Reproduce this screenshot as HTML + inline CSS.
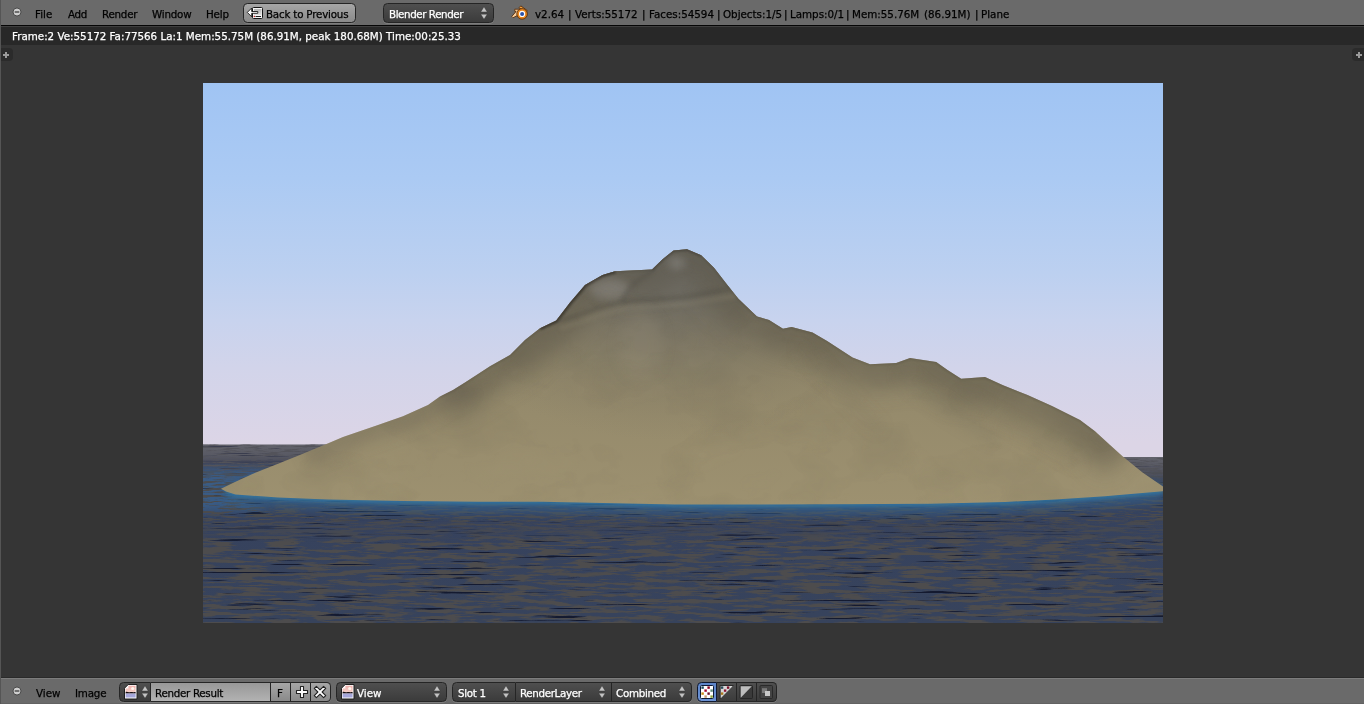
<!DOCTYPE html>
<html lang="en">
<head>
<meta charset="utf-8">
<title>Blender Render</title>
<style>
html,body{margin:0;padding:0;}
body{width:1364px;height:704px;overflow:hidden;background:#353535;position:relative;
  font-family:"DejaVu Sans","Liberation Sans",sans-serif;font-size:10.32px;line-height:13px;color:#000;}
.abs{position:absolute;}
#top{left:0;top:0;width:1364px;height:25px;background:#6a6a6a;}
#topline{left:0;top:25px;width:1364px;height:1px;background:#050505;}
#info{left:0;top:26px;width:1364px;height:19px;background:#282828;color:#fff;box-sizing:border-box;border-top:1px solid #3f3f3f;}
#bottom{left:0;top:677px;width:1364px;height:27px;background:linear-gradient(#2a2a2a 0,#2a2a2a 1px,#7d7d7d 1px,#7d7d7d 2px,#6a6a6a 2px,#6a6a6a 26px,#626262 26px);}
.t{position:absolute;white-space:nowrap;will-change:transform;-webkit-text-stroke:0.25px currentColor;}
.w{position:absolute;box-sizing:border-box;height:20px;border:1px solid #252525;box-shadow:0 1px 0 rgba(255,255,255,0.13);}
.rl{border-top-left-radius:4.5px;border-bottom-left-radius:4.5px;}
.rr{border-top-right-radius:4.5px;border-bottom-right-radius:4.5px;}
.nl{border-left:none;}
.light{background:linear-gradient(#a6a6a6,#8a8a8a);}
.field{background:linear-gradient(#989898,#b2b2b2);}
.dark{background:linear-gradient(#4f4f4f,#3b3b3b);color:#fff;}
.sel{background:linear-gradient(#5d85c9,#6b92d4);border-color:#10192f;}
#leftedge{left:0;top:0;width:1px;height:704px;background:#555;}
.corner{position:absolute;width:12px;height:13px;background:#2b2b2b;top:48px;}
svg{position:absolute;overflow:visible;}
</style>
</head>
<body>
<div id="top" class="abs">
<svg style="left:11.2px;top:5.5px" width="12" height="12" viewBox="-6 -6 12 12"><circle r="4" fill="#cdcdcd" stroke="#404040" stroke-width="0.9"/><rect x="-2.3" y="-0.6" width="4.6" height="1.2" fill="#333"/></svg>
<span class="t" style="left:35px;top:7.5px;letter-spacing:0px">File</span>
<span class="t" style="left:68px;top:7.5px;letter-spacing:-0.3px">Add</span>
<span class="t" style="left:102px;top:7.5px;letter-spacing:-0.25px">Render</span>
<span class="t" style="left:152px;top:7.5px;letter-spacing:-0.2px">Window</span>
<span class="t" style="left:206px;top:7.5px;letter-spacing:-0.15px">Help</span>
<div class="w rl rr light" style="left:243px;top:3px;width:113px"></div>
<span class="t" style="left:266px;top:7.5px;letter-spacing:-0.2px">Back to Previous</span>
<div class="w rl rr dark" style="left:383px;top:3px;width:111px"></div>
<span class="t" style="left:388.7px;top:7.5px;letter-spacing:-0.42px;color:#fff">Blender Render</span>
<svg style="left:480.4px;top:3px" width="8" height="20" viewBox="0 0 8 20"><path d="M4 3.8 L7.2 8.9 L0.8 8.9 Z M4 16.3 L7.2 11.2 L0.8 11.2 Z" fill="#c4c4c4" stroke="#333" stroke-width="0.4" stroke-linejoin="round"/></svg>
<span class="t" style="left:535px;top:7.5px">v2.64</span>
<span class="t" style="left:568px;top:7.5px">|</span>
<span class="t" style="left:575px;top:7.5px">Verts:55172</span>
<span class="t" style="left:642px;top:7.5px">|</span>
<span class="t" style="left:649px;top:7.5px">Faces:54594</span>
<span class="t" style="left:717px;top:7.5px">|</span>
<span class="t" style="left:723px;top:7.5px">Objects:1/5</span>
<span class="t" style="left:784px;top:7.5px">|</span>
<span class="t" style="left:790px;top:7.5px">Lamps:0/1</span>
<span class="t" style="left:846px;top:7.5px">|</span>
<span class="t" style="left:852px;top:7.5px">Mem:55.76M</span>
<span class="t" style="left:924px;top:7.5px">(86.91M)</span>
<span class="t" style="left:975px;top:7.5px">|</span>
<span class="t" style="left:981px;top:7.5px">Plane</span>
</div>
<div id="topline" class="abs"></div>
<div id="info" class="abs"><span class="t" style="left:12px;top:2.5px">Frame:2 Ve:55172 Fa:77566 La:1 Mem:55.75M (86.91M, peak 180.68M) Time:00:25.33</span></div>
<div class="corner" style="left:1px;border-radius:0 4px 4px 0"></div>
<svg style="left:3px;top:52px" width="6" height="6" viewBox="0 0 6 6"><path d="M2 0h2v2h2v2h-2v2h-2v-2h-2v-2h2z" fill="#9a9a9a"/></svg>
<div class="corner" style="left:1352px;border-radius:4px 0 0 4px"></div>
<svg style="left:1356px;top:52px" width="6" height="6" viewBox="0 0 6 6"><path d="M2 0h2v2h2v2h-2v2h-2v-2h-2v-2h2z" fill="#9a9a9a"/></svg>
<svg id="img" style="left:203px;top:83px" width="960" height="540" viewBox="203 83 960 540">
<defs>
<linearGradient id="sky" x1="0" y1="83" x2="0" y2="457" gradientUnits="userSpaceOnUse">
<stop offset="0" stop-color="#a0c4f3"/><stop offset="0.254" stop-color="#abcaf3"/><stop offset="0.508" stop-color="#bcd0f0"/><stop offset="0.634" stop-color="#c8d3ee"/><stop offset="0.762" stop-color="#d2d4ea"/><stop offset="0.965" stop-color="#dcd5e6"/>
</linearGradient>
<linearGradient id="mtn" x1="0" y1="249" x2="0" y2="505" gradientUnits="userSpaceOnUse">
<stop offset="0" stop-color="#857d66"/><stop offset="0.3" stop-color="#8c8368"/><stop offset="0.65" stop-color="#968b6c"/><stop offset="1" stop-color="#9d9170"/>
</linearGradient>
<radialGradient id="peak" gradientUnits="userSpaceOnUse" cx="0" cy="0" r="1" gradientTransform="translate(668 256) scale(250 185)">
<stop offset="0" stop-color="#6c6a65" stop-opacity="1"/><stop offset="0.25" stop-color="#6e6b62" stop-opacity="0.95"/><stop offset="0.55" stop-color="#787262" stop-opacity="0.6"/><stop offset="0.8" stop-color="#807862" stop-opacity="0.25"/><stop offset="1" stop-color="#857d66" stop-opacity="0"/>
</radialGradient>
<linearGradient id="sea" x1="0" y1="444" x2="0" y2="623" gradientUnits="userSpaceOnUse">
<stop offset="0" stop-color="#62636b"/><stop offset="0.06" stop-color="#595a64"/><stop offset="0.09" stop-color="#4e505d"/><stop offset="0.1" stop-color="#3d4156"/><stop offset="0.115" stop-color="#444b60"/><stop offset="0.14" stop-color="#3d4a66"/><stop offset="0.3" stop-color="#36425e"/><stop offset="1" stop-color="#37435c"/>
</linearGradient>
<linearGradient id="sear" x1="0" y1="457" x2="0" y2="490" gradientUnits="userSpaceOnUse">
<stop offset="0" stop-color="#62636b"/><stop offset="0.5" stop-color="#50525e"/><stop offset="0.75" stop-color="#3e4358"/><stop offset="1" stop-color="#3a5a88"/>
</linearGradient>
<linearGradient id="m1" x1="0" y1="444" x2="0" y2="623" gradientUnits="userSpaceOnUse">
<stop offset="0" stop-color="#fff"/><stop offset="0.12" stop-color="#fff"/><stop offset="0.22" stop-color="#000"/></linearGradient>
<linearGradient id="m2" x1="0" y1="444" x2="0" y2="623" gradientUnits="userSpaceOnUse">
<stop offset="0.1" stop-color="#000"/><stop offset="0.22" stop-color="#fff"/><stop offset="0.42" stop-color="#fff"/><stop offset="0.55" stop-color="#000"/></linearGradient>
<linearGradient id="m3" x1="0" y1="444" x2="0" y2="623" gradientUnits="userSpaceOnUse">
<stop offset="0.42" stop-color="#000"/><stop offset="0.55" stop-color="#fff"/></linearGradient>
<mask id="k1" maskUnits="userSpaceOnUse" x="203" y="440" width="960" height="190"><rect x="203" y="440" width="960" height="190" fill="url(#m1)"/></mask>
<mask id="k2" maskUnits="userSpaceOnUse" x="203" y="440" width="960" height="190"><rect x="203" y="440" width="960" height="190" fill="url(#m2)"/></mask>
<mask id="k3" maskUnits="userSpaceOnUse" x="203" y="440" width="960" height="190"><rect x="203" y="440" width="960" height="190" fill="url(#m3)"/></mask>
<clipPath id="frame"><rect x="203" y="83" width="960" height="540"/></clipPath>
<clipPath id="isl"><path d="M221,488.7 235,482 253,473.7 278,463.7 303,453.7 323,445.5 343,437 378,425 403,416.2 428,405 440,396.5 453,390 465,382.5 490,366.2 510,355 525,340 540,328.2 556.2,320.6 570,302.5 585,285 602.5,275 615,271.2 652,269.6 662.3,259.4 673.6,250.4 687,249.2 701.2,255.3 714,267.8 726,283.3 738.4,298.7 757,316.5 769,320 783,328.7 791.6,327 812.5,332.5 827.5,341.2 852.5,357.5 870,364.2 896.2,363 910,358 936.2,362 947.5,370 961.2,378.7 985,377 1002.5,385 1027.5,395 1052.5,406.2 1080,420 1095,431.2 1110,445 1122.5,456.2 1142.5,472.5 1163,486.5 L1163,491.2 1142.5,493 1105,496.2 1055,499.5 1005,502 930,503.7 830,504.3 675,504.5 543,501.7 478,501.7 403,501 328,499.5 278,497.5 235.5,494.5 226,491.5 Z"/></clipPath>
<clipPath id="seaclip"><path d="M203,444.5 L1100,444.5 L1100,457 L1163,457 L1163,623 L203,623 Z"/></clipPath>
<filter id="blur1" filterUnits="userSpaceOnUse" x="150" y="200" width="1100" height="460"><feGaussianBlur stdDeviation="1"/></filter>
<filter id="blur12" filterUnits="userSpaceOnUse" x="150" y="200" width="1100" height="460"><feGaussianBlur stdDeviation="11"/></filter>
<filter id="blur2m" filterUnits="userSpaceOnUse" x="150" y="200" width="1100" height="460"><feGaussianBlur stdDeviation="2"/></filter>
<filter id="blur8m" filterUnits="userSpaceOnUse" x="150" y="200" width="1100" height="460"><feGaussianBlur stdDeviation="7"/></filter>
<filter id="blur2" filterUnits="userSpaceOnUse" x="150" y="400" width="1100" height="260"><feGaussianBlur stdDeviation="2"/></filter>
<filter id="blur4" filterUnits="userSpaceOnUse" x="150" y="200" width="1100" height="460"><feGaussianBlur stdDeviation="4"/></filter>
<filter id="blur8" filterUnits="userSpaceOnUse" x="150" y="400" width="1100" height="260"><feGaussianBlur stdDeviation="8"/></filter>
<filter id="blur14" filterUnits="userSpaceOnUse" x="150" y="200" width="1100" height="460"><feGaussianBlur stdDeviation="14"/></filter>
<filter id="wb1" x="0" y="0" width="100%" height="100%" color-interpolation-filters="sRGB">
<feTurbulence type="fractalNoise" baseFrequency="0.05 0.9" numOctaves="5" seed="3"/>
<feColorMatrix type="matrix" values="0 0 0 0 0.325  0 0 0 0 0.325  0 0 0 0 0.353  6 0 0 0 -2.9"/>
</filter>
<filter id="wd1" x="0" y="0" width="100%" height="100%" color-interpolation-filters="sRGB">
<feTurbulence type="fractalNoise" baseFrequency="0.02 0.9" numOctaves="4" seed="11"/>
<feColorMatrix type="matrix" values="0 0 0 0 0.227  0 0 0 0 0.239  0 0 0 0 0.306  8 0 0 0 -5.2"/>
</filter>
<filter id="wb2" x="0" y="0" width="100%" height="100%" color-interpolation-filters="sRGB">
<feTurbulence type="fractalNoise" baseFrequency="0.04 0.5" numOctaves="5" seed="7"/>
<feColorMatrix type="matrix" values="0 0 0 0 0.294  0 0 0 0 0.294  0 0 0 0 0.302  7 0 0 0 -3.25"/>
</filter>
<filter id="wd2" x="0" y="0" width="100%" height="100%" color-interpolation-filters="sRGB">
<feTurbulence type="fractalNoise" baseFrequency="0.014 0.7" numOctaves="4" seed="21"/>
<feColorMatrix type="matrix" values="0 0 0 0 0.094  0 0 0 0 0.125  0 0 0 0 0.212  10 0 0 0 -6.7"/>
</filter>
<filter id="wb3" x="0" y="0" width="100%" height="100%" color-interpolation-filters="sRGB">
<feTurbulence type="fractalNoise" baseFrequency="0.03 0.3" numOctaves="5" seed="5"/>
<feColorMatrix type="matrix" values="0 0 0 0 0.302  0 0 0 0 0.298  0 0 0 0 0.302  7 0 0 0 -3.15"/>
</filter>
<filter id="wd3" x="0" y="0" width="100%" height="100%" color-interpolation-filters="sRGB">
<feTurbulence type="fractalNoise" baseFrequency="0.01 0.5" numOctaves="4" seed="17"/>
<feColorMatrix type="matrix" values="0 0 0 0 0.078  0 0 0 0 0.102  0 0 0 0 0.188  10 0 0 0 -6.7"/>
</filter>
<filter id="mt1" x="0" y="0" width="100%" height="100%" color-interpolation-filters="sRGB">
<feTurbulence type="fractalNoise" baseFrequency="0.012 0.02" numOctaves="4" seed="4"/>
<feColorMatrix type="matrix" values="0 0 0 0 0.298  0 0 0 0 0.282  0 0 0 0 0.243  3 0 0 0 -1.45"/>
</filter>
<filter id="mt2" x="0" y="0" width="100%" height="100%" color-interpolation-filters="sRGB">
<feTurbulence type="fractalNoise" baseFrequency="0.012 0.02" numOctaves="4" seed="9"/>
<feColorMatrix type="matrix" values="0 0 0 0 0.718  0 0 0 0 0.671  0 0 0 0 0.541  3 0 0 0 -1.5"/>
</filter>
</defs>
<g clip-path="url(#frame)">
<rect x="203" y="83" width="960" height="540" fill="url(#sky)"/>
<g clip-path="url(#seaclip)">
<rect x="203" y="444" width="960" height="180" fill="url(#sea)"/>
<rect x="1100" y="456" width="64" height="34" fill="url(#sear)"/>
<!-- blue shallow zone around island -->
<path d="M195,470 L290,470 L225,490 L270,510 L195,512 Z" fill="#3b628e" opacity="0.8" filter="url(#blur4)"/>
<g mask="url(#k1)"><rect x="203" y="444" width="960" height="60" filter="url(#wb1)"/><rect x="203" y="444" width="960" height="60" filter="url(#wd1)"/></g>
<g mask="url(#k2)"><rect x="203" y="455" width="960" height="100" filter="url(#wb2)"/><rect x="203" y="455" width="960" height="100" filter="url(#wd2)"/></g>
<g mask="url(#k3)"><rect x="203" y="510" width="960" height="114" filter="url(#wb3)"/><rect x="203" y="510" width="960" height="114" filter="url(#wd3)"/></g>
<path d="M226,491.5 235.5,494.5 278,497.5 328,499.5 403,501 478,501.7 543,501.7 675,504.5 830,504.3 930,503.7 1005,502 1055,499.5 1105,496.2 1142.5,493 1163,491.2" fill="none" stroke="#34648f" stroke-width="22" opacity="0.6" filter="url(#blur4)"/>
<path d="M226,491.5 235.5,494.5 278,497.5 328,499.5 403,501 478,501.7 543,501.7 675,504.5 830,504.3 930,503.7 1005,502 1055,499.5 1105,496.2 1142.5,493 1163,491.2" fill="none" stroke="#3383b2" stroke-width="4" opacity="0.85" filter="url(#blur2)"/>
</g>
<path d="M221,488.7 235,482 253,473.7 278,463.7 303,453.7 323,445.5 343,437 378,425 403,416.2 428,405 440,396.5 453,390 465,382.5 490,366.2 510,355 525,340 540,328.2 556.2,320.6 570,302.5 585,285 602.5,275 615,271.2 652,269.6 662.3,259.4 673.6,250.4 687,249.2 701.2,255.3 714,267.8 726,283.3 738.4,298.7 757,316.5 769,320 783,328.7 791.6,327 812.5,332.5 827.5,341.2 852.5,357.5 870,364.2 896.2,363 910,358 936.2,362 947.5,370 961.2,378.7 985,377 1002.5,385 1027.5,395 1052.5,406.2 1080,420 1095,431.2 1110,445 1122.5,456.2 1142.5,472.5 1163,486.5 L1163,491.2 1142.5,493 1105,496.2 1055,499.5 1005,502 930,503.7 830,504.3 675,504.5 543,501.7 478,501.7 403,501 328,499.5 278,497.5 235.5,494.5 226,491.5 Z" fill="url(#mtn)"/>
<g clip-path="url(#isl)">
<rect x="203" y="240" width="960" height="270" fill="url(#peak)"/>
<!-- shading features -->
<path d="M440,396 L453,390 465,382.5 490,366.2 510,355 525,340 540,328.2 556.2,320.6 570,302.5 585,285 602.5,275 615,271.2 652,269.6 662.3,259.4 673.6,250.4 687,249.2 701.2,255.3 714,267.8 726,283.3 738.4,298.7 757,316.5 769,320 783,328.7 791.6,327 812.5,332.5 827.5,341.2 852.5,357.5 870,364.2 896.2,363 910,358 936.2,362 947.5,370 961.2,378.7 985,377 1002.5,385 1027.5,395 1052.5,406.2 1080,420 1095,431.2 1110,445 1122.5,456.2" fill="none" stroke="#5c574a" stroke-width="50" opacity="0.5" filter="url(#blur12)"/>
<path d="M303,453 L323,445.5 343,437 378,425 403,416.2 428,405 440,396.5 453,390 465,382.5" fill="none" stroke="#6a6454" stroke-width="30" opacity="0.3" filter="url(#blur8m)"/>
<path d="M900,372 C930,400 960,420 1000,440" fill="none" stroke="#7a735e" stroke-width="10" opacity="0.35" filter="url(#blur8m)"/>
<path d="M800,345 C830,380 850,400 880,430" fill="none" stroke="#7a735e" stroke-width="10" opacity="0.3" filter="url(#blur8m)"/>
<path d="M960,395 C1000,420 1040,440 1080,465" fill="none" stroke="#7a735e" stroke-width="8" opacity="0.3" filter="url(#blur8m)"/>
<path d="M440,396 L453,390 465,382.5 490,366.2 510,355 525,340 540,328.2 556.2,320.6 570,302.5 585,285 602.5,275 615,271.2 652,269.6 662.3,259.4 673.6,250.4 687,249.2 701.2,255.3 714,267.8 726,283.3 738.4,298.7 757,316.5 769,320 783,328.7 791.6,327 812.5,332.5 827.5,341.2 852.5,357.5 870,364.2 896.2,363 910,358 936.2,362 947.5,370 961.2,378.7 985,377 1002.5,385 1027.5,395 1052.5,406.2 1080,420 1095,431.2" fill="none" stroke="#3b3932" stroke-width="2.5" opacity="0.22" filter="url(#blur1)"/>
<path d="M540,328 L556,320.6 L570,302.5 L585,285 L602.5,275 L615,271.2" fill="none" stroke="#2a2824" stroke-width="4.5" opacity="0.62" filter="url(#blur1)"/>
<path d="M652,269.6 L662.3,259.4 L673.6,250.4 L687,249.2 L701,255" fill="none" stroke="#34322e" stroke-width="2.5" opacity="0.4" filter="url(#blur1)"/>
<ellipse cx="677" cy="263" rx="9" ry="6" fill="#8d8b86" opacity="0.55" filter="url(#blur4)"/>
<ellipse cx="609" cy="289" rx="20" ry="10" fill="#8b8882" opacity="0.62" filter="url(#blur4)"/>
<path d="M557,321 C580,316 598,306 620,302 C640,298.5 665,300 690,296 C705,293 720,291 731,288" fill="none" stroke="#4a463e" stroke-width="2.5" opacity="0.5" filter="url(#blur2m)"/>
<path d="M560,328 C582,323 600,313 622,309 C642,305.5 667,307 692,303 C707,300 722,298 736,296" fill="none" stroke="#989078" stroke-width="5" opacity="0.22" filter="url(#blur2m)"/>
<ellipse cx="641" cy="345" rx="22" ry="34" fill="#9b937e" opacity="0.22" filter="url(#blur8m)"/>
<path d="M653,270 C645,277 636,281 630,288 C626,294 624,298 622,302" fill="none" stroke="#4a4740" stroke-width="3" opacity="0.4" filter="url(#blur2m)"/>
<rect x="203" y="240" width="960" height="270" filter="url(#mt1)" opacity="0.08"/>
<rect x="203" y="240" width="960" height="270" filter="url(#mt2)" opacity="0.07"/>
</g>
</g>
</svg>
<div id="bottom" class="abs"></div>
<svg style="left:11.2px;top:684.5px" width="12" height="12" viewBox="-6 -6 12 12"><circle r="4" fill="#cdcdcd" stroke="#404040" stroke-width="0.9"/><rect x="-2.3" y="-0.6" width="4.6" height="1.2" fill="#333"/></svg>
<span class="t" style="left:36.2px;top:686.5px;color:#000;letter-spacing:0px">View</span>
<span class="t" style="left:74.6px;top:686.5px;color:#000;letter-spacing:-0.2px">Image</span>
<div class="w rl dark" style="left:119px;top:682px;width:32px"></div>
<svg style="left:124.2px;top:684.2px" width="14" height="16" viewBox="0 0 14 16">
<defs><linearGradient id="pk124" x1="0" y1="0" x2="0" y2="1"><stop offset="0" stop-color="#eeb0ac"/><stop offset="1" stop-color="#f7d3cb"/></linearGradient></defs>
<path d="M4.2 0.5 H13 V15 H0.5 V4.2 Z" fill="#fbfbfb" stroke="#1f1f1f" stroke-width="1" stroke-linejoin="round"/>
<path d="M1.6 4.6 L4.4 4.6 L4.4 1.7 L11.6 1.7 L11.6 8.6 L1.6 8.6 Z" fill="url(#pk124)"/>
<circle cx="8.7" cy="4.5" r="1.6" fill="#fff6ee"/>
<path d="M1.6 7.9 C3 7.4 4 8.4 5.5 8.2 C7 8 8 7.6 9 8.2 C10 8.5 11 7.9 11.6 8.1 L11.6 9.6 L1.6 9.6 Z" fill="#170d12"/>
<rect x="1.6" y="9.6" width="10" height="3.9" fill="#a5a6da"/>
</svg>
<svg style="left:140.9px;top:682px" width="8" height="20" viewBox="0 0 8 20"><path d="M4 3.8 L7.2 8.9 L0.8 8.9 Z M4 16.3 L7.2 11.2 L0.8 11.2 Z" fill="#c4c4c4" stroke="#333" stroke-width="0.4" stroke-linejoin="round"/></svg>
<div class="w nl field" style="left:151px;top:682px;width:120px"></div>
<span class="t" style="left:154.8px;top:686.5px;color:#000;letter-spacing:-0.3px">Render Result</span>
<div class="w nl light" style="left:271px;top:682px;width:20px"></div>
<span class="t" style="left:277.2px;top:686.5px;color:#000;letter-spacing:0px">F</span>
<div class="w nl light" style="left:291px;top:682px;width:20px"></div>
<svg style="left:296px;top:686px" width="12" height="12" viewBox="-6 -6 12 12"><path d="M-1.5 -5.5h3v4h4v3h-4v4h-3v-4h-4v-3h4z" fill="#fff" stroke="#222" stroke-width="1.1" stroke-linejoin="round"/></svg>
<div class="w nl rr light" style="left:311px;top:682px;width:20px"></div>
<svg style="left:314px;top:686px" width="12" height="12" viewBox="-6 -6 12 12"><path transform="rotate(45)" d="M-1.5 -6.6h3v5.1h5.1v3h-5.1v5.1h-3v-5.1h-5.1v-3h5.1z" fill="#fff" stroke="#222" stroke-width="1.1" stroke-linejoin="round"/></svg>
<div class="w rl rr dark" style="left:336px;top:682px;width:111px"></div>
<svg style="left:341.2px;top:684.2px" width="14" height="16" viewBox="0 0 14 16">
<defs><linearGradient id="pk341" x1="0" y1="0" x2="0" y2="1"><stop offset="0" stop-color="#eeb0ac"/><stop offset="1" stop-color="#f7d3cb"/></linearGradient></defs>
<path d="M4.2 0.5 H13 V15 H0.5 V4.2 Z" fill="#fbfbfb" stroke="#1f1f1f" stroke-width="1" stroke-linejoin="round"/>
<path d="M1.6 4.6 L4.4 4.6 L4.4 1.7 L11.6 1.7 L11.6 8.6 L1.6 8.6 Z" fill="url(#pk341)"/>
<circle cx="8.7" cy="4.5" r="1.6" fill="#fff6ee"/>
<path d="M1.6 7.9 C3 7.4 4 8.4 5.5 8.2 C7 8 8 7.6 9 8.2 C10 8.5 11 7.9 11.6 8.1 L11.6 9.6 L1.6 9.6 Z" fill="#170d12"/>
<rect x="1.6" y="9.6" width="10" height="3.9" fill="#a5a6da"/>
</svg>
<span class="t" style="left:356.6px;top:686.5px;color:#fff;letter-spacing:0px">View</span>
<svg style="left:432.8px;top:682px" width="8" height="20" viewBox="0 0 8 20"><path d="M4 3.8 L7.2 8.9 L0.8 8.9 Z M4 16.3 L7.2 11.2 L0.8 11.2 Z" fill="#c4c4c4" stroke="#333" stroke-width="0.4" stroke-linejoin="round"/></svg>
<div class="w rl dark" style="left:452px;top:682px;width:64px"></div>
<span class="t" style="left:457.8px;top:686.5px;color:#fff;letter-spacing:-0.3px">Slot 1</span>
<svg style="left:502px;top:682px" width="8" height="20" viewBox="0 0 8 20"><path d="M4 3.8 L7.2 8.9 L0.8 8.9 Z M4 16.3 L7.2 11.2 L0.8 11.2 Z" fill="#c4c4c4" stroke="#333" stroke-width="0.4" stroke-linejoin="round"/></svg>
<div class="w nl dark" style="left:516px;top:682px;width:96px"></div>
<span class="t" style="left:520px;top:686.5px;color:#fff;letter-spacing:-0.35px">RenderLayer</span>
<svg style="left:598.2px;top:682px" width="8" height="20" viewBox="0 0 8 20"><path d="M4 3.8 L7.2 8.9 L0.8 8.9 Z M4 16.3 L7.2 11.2 L0.8 11.2 Z" fill="#c4c4c4" stroke="#333" stroke-width="0.4" stroke-linejoin="round"/></svg>
<div class="w nl rr dark" style="left:612px;top:682px;width:80px"></div>
<span class="t" style="left:615.8px;top:686.5px;color:#fff;letter-spacing:-0.3px">Combined</span>
<svg style="left:678.2px;top:682px" width="8" height="20" viewBox="0 0 8 20"><path d="M4 3.8 L7.2 8.9 L0.8 8.9 Z M4 16.3 L7.2 11.2 L0.8 11.2 Z" fill="#c4c4c4" stroke="#333" stroke-width="0.4" stroke-linejoin="round"/></svg>
<div class="w rl sel" style="left:697px;top:682px;width:20px"></div>
<div class="w nl dark" style="left:717px;top:682px;width:20px"></div>
<div class="w nl dark" style="left:737px;top:682px;width:20px"></div>
<div class="w nl rr dark" style="left:757px;top:682px;width:20px"></div>
<svg id="icons" style="left:0;top:0" width="1364" height="704" viewBox="0 0 1364 704">
<defs><linearGradient id="gwin" x1="0" y1="0" x2="0" y2="1"><stop offset="0" stop-color="#b4b4b4"/><stop offset="1" stop-color="#e0e0e0"/></linearGradient></defs>
<rect x="252.5" y="7.5" width="10" height="11" rx="1" fill="#f6f6f6" stroke="#161616" stroke-width="1"/>
<rect x="254" y="9" width="7.5" height="6" fill="url(#gwin)"/>
<rect x="255.5" y="16" width="5.5" height="1" fill="#222"/>
<rect x="253.7" y="15.8" width="1.3" height="1.3" fill="#c02020"/>
<path d="M247.3,12.4 L251.7,8 L251.7,11.5 L257.8,11.5 L257.8,13.3 L251.7,13.3 L251.7,16.8 Z" fill="#fff" stroke="#161616" stroke-width="0.9" stroke-linejoin="round"/>
<g stroke="#5a300c" stroke-width="0.9" stroke-linejoin="round">
<path d="M519.2,7.5 L520.8,5.9 L527.3,10.6 L524.5,12.9 Z" fill="#f0a040"/>
<path d="M514.8,9.2 L521.8,9.2 L521.8,11.2 L518.4,15 L513.1,17.7 L511.8,16.4 L516,11.6 L514.8,11.3 Z" fill="#f8cc98"/>
<circle cx="522.1" cy="13.9" r="5.3" fill="#e8851c"/>
</g>
<circle cx="522.1" cy="13.9" r="3.1" fill="#fff"/>
<circle cx="522.1" cy="13.9" r="2" fill="#2b52a8"/>
<rect x="700.5" y="685.5" width="13" height="13" rx="1" fill="#fff" stroke="#0d1a35" stroke-width="1"/>
<g><rect x="701" y="686" width="12" height="12" fill="#fff"/><rect x="701.4" y="686.4" width="2.4" height="2.4" fill="#1d4a5e"/><rect x="707.4" y="686.4" width="2.4" height="2.4" fill="#8b0020"/><rect x="704.4" y="689.4" width="2.4" height="2.4" fill="#a3052e"/><rect x="710.4" y="689.4" width="2.4" height="2.4" fill="#5f8a7a"/><rect x="701.4" y="692.4" width="2.4" height="2.4" fill="#c98a12"/><rect x="707.4" y="692.4" width="2.4" height="2.4" fill="#6e0f2a"/><rect x="704.4" y="695.4" width="2.4" height="2.4" fill="#c59b72"/><rect x="710.4" y="695.4" width="2.4" height="2.4" fill="#8aa23a"/></g>
<defs><clipPath id="tri"><path d="M720.5,685.8 L733,685.8 L720.5,698.5 Z"/></clipPath></defs>
<path d="M720,699 L720,685.5 L733.5,685.5" fill="none" stroke="#2a2a2a" stroke-width="1"/>
<g opacity="0.78"><g clip-path="url(#tri)"><rect x="720.5" y="686" width="12" height="12" fill="#fff"/><rect x="720.9" y="686.4" width="2.4" height="2.4" fill="#1d4a5e"/><rect x="726.9" y="686.4" width="2.4" height="2.4" fill="#8b0020"/><rect x="723.9" y="689.4" width="2.4" height="2.4" fill="#a3052e"/><rect x="729.9" y="689.4" width="2.4" height="2.4" fill="#5f8a7a"/><rect x="720.9" y="692.4" width="2.4" height="2.4" fill="#c98a12"/><rect x="726.9" y="692.4" width="2.4" height="2.4" fill="#6e0f2a"/><rect x="723.9" y="695.4" width="2.4" height="2.4" fill="#c59b72"/><rect x="729.9" y="695.4" width="2.4" height="2.4" fill="#8aa23a"/></g></g>
<rect x="740" y="685.5" width="12.5" height="13" rx="1" fill="#3a3a3a" stroke="#262626" stroke-width="1"/>
<path d="M740.7,686.2 L751.8,686.2 L740.7,697.8 Z" fill="#bdbdbd"/>
<rect x="760" y="685.5" width="12.5" height="13" rx="1" fill="#444" stroke="#2a2a2a" stroke-width="1"/>
<rect x="762" y="688.2" width="5" height="4.8" fill="#7a7a7a"/>
<rect x="765" y="691" width="5" height="5" fill="#c8c8c8"/>
</svg>
<div id="leftedge" class="abs"></div>
</body>
</html>
